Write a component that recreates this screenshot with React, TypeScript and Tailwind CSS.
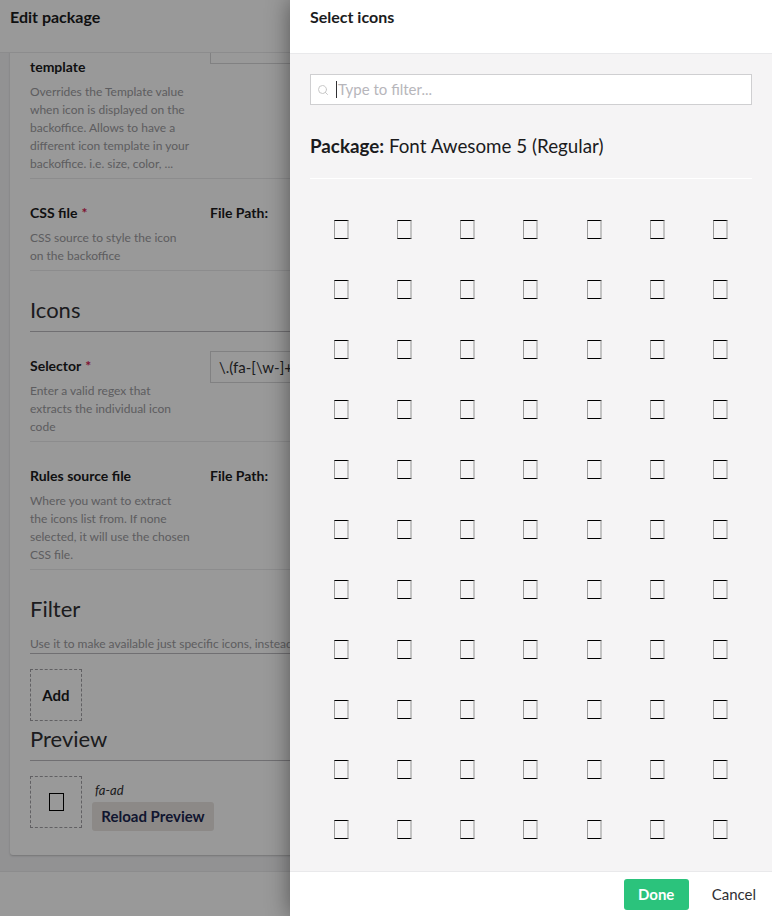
import { Search } from "lucide-react";

function Tofu({ dark = false }: { dark?: boolean }) {
  return (
    <span
      className={
        dark
          ? "block h-[18px] w-[15px] border border-black"
          : "block h-[19px] w-[15px] border-y border-y-black border-l-[1.5px] border-l-[#9a9a9a] border-r-2 border-r-[#c4c4c4]"
      }
    />
  );
}

function Row({
  label,
  required,
  desc,
  right,
}: {
  label: React.ReactNode;
  required?: boolean;
  desc: React.ReactNode;
  right?: React.ReactNode;
}) {
  return (
    <div className="flex border-b border-[#e9e9eb] pb-[5px] pt-[24px]">
      <div className="w-[180px] shrink-0 pr-[20px]">
        <div className="text-[14px] font-bold leading-[20px] text-[#1b1b1d]">
          {label}
          {required && <span className="ml-1 text-[#d42054]">*</span>}
        </div>
        <div className="mt-[6px] text-[12px] leading-[18px] text-[#9c9ba0]">{desc}</div>
      </div>
      <div className="flex-1">{right}</div>
    </div>
  );
}

function SectionTitle({ children, className }: { children: React.ReactNode; className: string }) {
  return (
    <div className={"border-b border-[#bbbabf] pb-[8px] text-[22px] leading-[26px] text-[#303033] " + className}>
      {children}
    </div>
  );
}

function FilePath() {
  return <div className="text-[14px] font-bold leading-[20px] text-[#1b1b1d]">File Path:</div>;
}

export default function App() {
  const cells = Array.from({ length: 77 }, (_, i) => i);

  return (
    <div className="relative h-[916px] w-[772px] overflow-hidden bg-[#f3f3f5] font-[Lato,sans-serif]">
      {/* underlying editor */}
      <div className="flex h-full flex-col">
        <div className="h-[53px] shrink-0 border-b border-[#e9e9eb] bg-white px-[10px] pt-[6px] text-[16px] font-bold leading-[22px] text-[#1b1b1d]">
          Edit package
        </div>
        <div className="min-h-0 flex-1 overflow-hidden">
          <div className="mx-[10px] -mt-[40px] rounded-[3px] bg-white px-[20px] pb-[24px] pt-[20px] shadow-[0_1px_2px_rgba(0,0,0,0.2)]">
            <Row
              label="template"
              desc="Overrides the Template value when icon is displayed on the backoffice. Allows to have a different icon template in your backoffice. i.e. size, color, ..."
              right={<div className="-mt-[26px] h-[33px] w-[340px] border border-[#d8d7d9]" />}
            />
            <Row label="CSS file" required desc="CSS source to style the icon on the backoffice" right={<FilePath />} />
            <SectionTitle className="mt-[26px]">Icons</SectionTitle>
            <Row
              label="Selector"
              required
              desc="Enter a valid regex that extracts the individual icon code"
              right={
                <div className="-mt-[5px] h-[32px] w-[340px] border border-[#d8d7d9] px-[8px] text-[15px] leading-[30px] text-[#303033]">
                  {"\\.(fa-[\\w-]+):before"}
                </div>
              }
            />
            <Row
              label="Rules source file"
              desc="Where you want to extract the icons list from. If none selected, it will use the chosen CSS file."
              right={<FilePath />}
            />
            <div className="mt-[26px] text-[22px] leading-[26px] text-[#303033]">Filter</div>
            <div className="mt-[12px] whitespace-nowrap border-b border-[#bbbabf] text-[12px] leading-[19px] text-[#9c9ba0]">
              Use it to make available just specific icons, instead of the full list of icons in the package.
            </div>
            <div className="mt-[15px] flex h-[52px] w-[52px] items-center justify-center border border-dashed border-[#a2a1a6] text-[15px] font-bold text-[#1b1b1d]">
              Add
            </div>
            <SectionTitle className="mt-[5px]">Preview</SectionTitle>
            <div className="mt-[15px] flex items-start">
              <div className="flex h-[52px] w-[52px] items-center justify-center border border-dashed border-[#a2a1a6]">
                <Tofu dark />
              </div>
              <div className="ml-[10px]">
                <div className="mt-[5px] pl-[3px] text-[13px] italic leading-[19px] text-[#303033]">fa-ad</div>
                <div className="mt-[2px] flex h-[29px] w-[122px] items-center justify-center rounded-[3px] bg-[#eae5e2] text-[15px] font-bold text-[#1b264f]">
                  Reload Preview
                </div>
              </div>
            </div>
          </div>
        </div>
        <div className="h-[45px] shrink-0 border-t border-[#e9e9eb] bg-white" />
      </div>

      {/* backdrop */}
      <div className="absolute inset-0 bg-black/40" />

      {/* side panel */}
      <div className="absolute right-0 top-0 flex h-full w-[482px] flex-col bg-[#f5f4f5] shadow-[0_0_22px_rgba(0,0,0,0.45)]">
        <div className="h-[54px] shrink-0 border-b border-[#e9e9eb] bg-white px-[20px] pt-[6px] text-[16px] font-bold leading-[22px] text-[#1b1b1d]">
          Select icons
        </div>
        <div className="min-h-0 flex-1 overflow-hidden px-[20px] pt-[20px]">
          <div className="flex h-[31px] items-center border border-[#cfcfd1] bg-white pl-[6px]">
            <Search size={12} strokeWidth={2} className="text-[#c8c8c8]" />
            <span className="ml-[7px] h-[17px] w-px bg-[#303033]" />
            <span className="ml-px text-[15px] text-[#b7b6bb]">Type to filter...</span>
          </div>
          <div className="mt-[29px] text-[18.8px] leading-[24px] text-[#1b1b1d]">
            <span className="font-bold">Package:</span> Font Awesome 5 (Regular)
          </div>
          <div className="mt-[20px] border-b border-white" />
          <div className="mt-[20px] grid grid-cols-7">
            {cells.map((i) => (
              <div key={i} className="flex h-[60px] items-center justify-center">
                <Tofu />
              </div>
            ))}
          </div>
        </div>
        <div className="flex h-[45px] shrink-0 items-center justify-end gap-[23px] border-t border-[#e9e9eb] bg-white pr-[16px]">
          <button
            type="button"
            className="flex h-[31px] w-[65px] items-center justify-center rounded-[3px] bg-[#2bc37c] text-[15px] font-bold text-white"
          >
            Done
          </button>
          <button type="button" className="text-[15px] text-[#303033]">
            Cancel
          </button>
        </div>
      </div>
    </div>
  );
}
